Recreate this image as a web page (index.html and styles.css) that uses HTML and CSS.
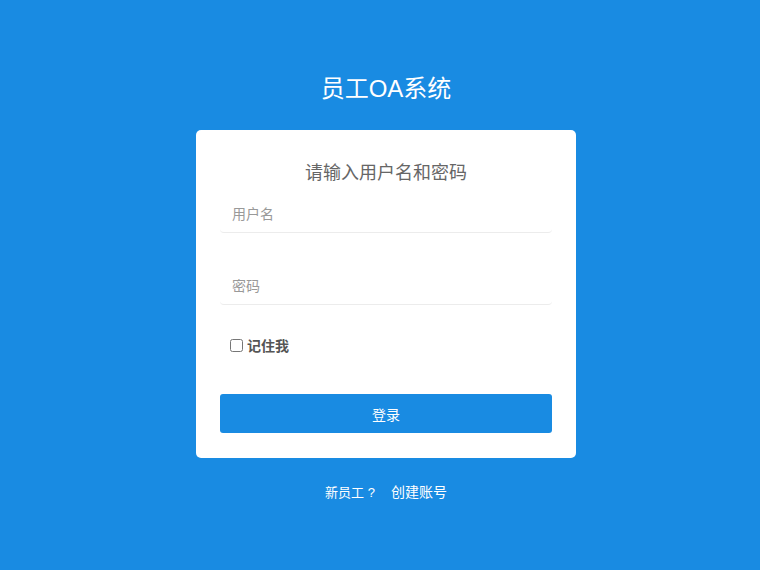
FILE: index.html
```html
<!DOCTYPE html>
<html lang="zh">
<head>
<meta charset="utf-8">
<title>员工OA系统</title>
<link rel="stylesheet" href="styles.css">
</head>
<body>
<div class="page">
  <h1 class="title">员工OA系统</h1>
  <form class="card">
    <h2 class="card-title">请输入用户名和密码</h2>
    <input class="field" type="text" placeholder="用户名">
    <input class="field field-pw" type="password" placeholder="密码">
    <label class="remember"><input type="checkbox" class="check"><span>记住我</span></label>
    <button type="button" class="btn">登录</button>
  </form>
  <div class="footer">
    <span class="new">新员工 ?</span>
    <a class="create" href="#">创建账号</a>
  </div>
</div>
</body>
</html>
```
FILE: styles.css
```css
html, body {
  margin: 0;
  padding: 0;
  height: 100%;
}
body {
  background: #198be2;
  font-family: "Liberation Sans", "Noto Sans CJK SC", sans-serif;
}
.page {
  display: flex;
  flex-direction: column;
  align-items: center;
  padding-top: 72px;
  padding-left: 12px;
}
.title {
  margin: 0;
  color: #fff;
  font-size: 24px;
  font-weight: normal;
  line-height: 34px;
  height: 34px;
}
.card {
  margin-top: 24px;
  width: 380px;
  box-sizing: border-box;
  background: #fff;
  border-radius: 5px;
  padding: 31px 24px 25px 24px;
  display: flex;
  flex-direction: column;
}
.card-title {
  margin: 0;
  text-align: center;
  font-size: 18px;
  font-weight: normal;
  color: #666;
  line-height: 24px;
}
.field {
  height: 38px;
  box-sizing: border-box;
  border: none;
  border-bottom: 1px solid #ececec;
  border-radius: 4px;
  padding: 0 12px;
  font-size: 14px;
  font-family: inherit;
  color: #333;
  outline: none;
  margin-top: 10px;
  width: 100%;
}
.field::placeholder {
  color: #999;
}
.field-pw {
  margin-top: 34px;
}
.remember {
  display: flex;
  align-items: center;
  margin-top: 30px;
  padding-left: 9px;
  font-size: 14px;
  font-weight: bold;
  color: #555;
  height: 20px;
}
.check {
  margin: 0 4px 0 1px;
  width: 13px;
  height: 13px;
}
.btn {
  margin-top: 39px;
  height: 39px;
  border: none;
  border-radius: 3px;
  background: #198be2;
  color: #fff;
  font-size: 14px;
  font-family: inherit;
  width: 100%;
}
.footer {
  margin-top: 23px;
  display: flex;
  align-items: baseline;
  gap: 16px;
  color: #fff;
}
.new {
  font-size: 13px;
}
.create {
  font-size: 14px;
  color: #fff;
  text-decoration: none;
}
```
